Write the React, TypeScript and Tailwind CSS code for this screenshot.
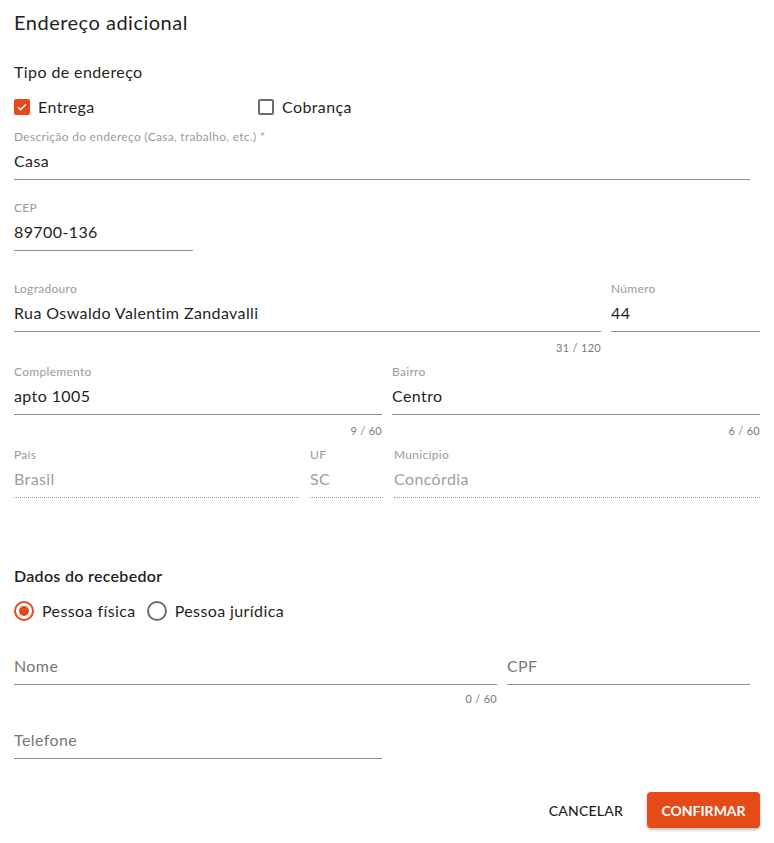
import React from "react";

const ORANGE = "#e64a19";

function Field({
  label,
  value,
  placeholder,
  width,
  disabled,
  counter,
}: {
  label?: string;
  value?: string;
  placeholder?: string;
  width: string;
  disabled?: boolean;
  counter?: string;
}) {
  return (
    <div className={width}>
      <div className={disabled ? "border-b border-dotted border-[#9a9a9a]" : "border-b border-[#8f8f8f]"}>
        <div className="h-[20px] text-[12px] leading-[16px] tracking-[0.3px] text-[#9b9b9b]">{label}</div>
        <div
          className={
            "h-[30px] pb-[6px] text-[16px] leading-[24px] tracking-[0.4px] " +
            (disabled ? "text-[#9e9e9e]" : value ? "text-[#1f1f1f]" : "text-[#777777]")
          }
        >
          {value ?? placeholder}
        </div>
      </div>
      {counter !== undefined && (
        <div className="h-[24px] pt-[8px] text-right text-[11px] leading-[16px] tracking-[0.3px] text-[#7a7a7a]">
          {counter}
        </div>
      )}
    </div>
  );
}

export default function App() {
  return (
    <div
      className="w-[774px] min-h-[843px] bg-white px-[14px] pt-[8px] text-[#1f1f1f]"
      style={{ fontFamily: "Lato, 'Noto Sans', sans-serif" }}
    >
      <h2 className="text-[20px] leading-[28px] font-normal tracking-[0.5px]">Endereço adicional</h2>
      <p className="mt-[24px] text-[16px] leading-[24px] tracking-[0.4px]">Tipo de endereço</p>

      <div className="mt-[11px] flex h-[24px] items-center text-[16px] tracking-[0.4px]">
        <div className="flex w-[244px] items-center">
          <span className="flex h-[16px] w-[16px] items-center justify-center rounded-[2px] bg-[#e64a19]">
            <svg width="12" height="12" viewBox="0 0 24 24" fill="none" stroke="white" strokeWidth="3">
              <path d="M4 12.5l5 5L20 6.5" />
            </svg>
          </span>
          <span className="ml-[8px]">Entrega</span>
        </div>
        <div className="flex items-center">
          <span className="h-[16px] w-[16px] rounded-[2px] border-2 border-[#6d6d6d]" />
          <span className="ml-[8px]">Cobrança</span>
        </div>
      </div>

      <div className="mt-[10px]">
        <Field width="w-[736px]" label="Descrição do endereço (Casa, trabalho, etc.) *" value="Casa" />
      </div>

      <div className="mt-[20px]">
        <Field width="w-[179px]" label="CEP" value="89700-136" />
      </div>

      <div className="mt-[30px] flex gap-[10px]">
        <Field width="w-[587px]" label="Logradouro" value="Rua Oswaldo Valentim Zandavalli" counter="31 / 120" />
        <Field width="w-[149px]" label="Número" value="44" />
      </div>

      <div className="mt-[8px] flex gap-[10px]">
        <Field width="w-[368px]" label="Complemento" value="apto 1005" counter="9 / 60" />
        <Field width="w-[368px]" label="Bairro" value="Centro" counter="6 / 60" />
      </div>

      <div className="mt-[8px] flex gap-[11px]">
        <Field width="w-[285px]" label="País" value="Brasil" disabled />
        <Field width="w-[73px]" label="UF" value="SC" disabled />
        <Field width="w-[366px]" label="Município" value="Concórdia" disabled />
      </div>

      <p className="mt-[66px] text-[16px] leading-[24px] font-semibold tracking-[0.3px]">Dados do recebedor</p>

      <div className="mt-[11px] flex h-[24px] items-center text-[16px] tracking-[0.4px]">
        <span className="flex h-[20px] w-[20px] items-center justify-center rounded-full border-2 border-[#e64a19]">
          <span className="h-[10px] w-[10px] rounded-full bg-[#e64a19]" />
        </span>
        <span className="ml-[8px]">Pessoa física</span>
        <span className="ml-[11px] h-[20px] w-[20px] rounded-full border-2 border-[#6d6d6d]" />
        <span className="ml-[8px]">Pessoa jurídica</span>
      </div>

      <div className="mt-[11px] flex gap-[10px]">
        <div className="w-[483px]">
          <Field width="w-[483px]" placeholder="Nome" />
          <div className="h-[20px] pt-[6px] text-right text-[11px] leading-[16px] tracking-[0.3px] text-[#7a7a7a]">
            0 / 60
          </div>
        </div>
        <Field width="w-[243px]" placeholder="CPF" />
      </div>

      <div className="mt-[3px]">
        <Field width="w-[368px]" placeholder="Telefone" />
      </div>

      <div className="mt-[33px] flex w-[746px] items-center justify-end">
        <button className="mr-[24px] h-[36px] px-0 text-[14px] font-medium tracking-[0.2px] text-[#1f1f1f]">
          CANCELAR
        </button>
        <button
          className="h-[36px] w-[113px] rounded-[4px] text-[14px] font-bold text-white shadow-[0_2px_3px_rgba(0,0,0,0.25)]"
          style={{ backgroundColor: ORANGE }}
        >
          CONFIRMAR
        </button>
      </div>
    </div>
  );
}
